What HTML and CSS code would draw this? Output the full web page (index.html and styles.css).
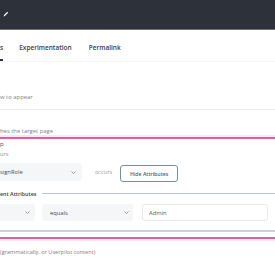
FILE: index.html
```html
<!DOCTYPE html>
<html>
<head>
<meta charset="utf-8">
<link rel="stylesheet" href="styles.css">
</head>
<body>
<header class="topbar">
  <svg class="pencil" width="6" height="6" viewBox="0 0 6 6"><path d="M0.6 5.4 L1 4.1 L4.3 0.8 L5.2 1.7 L1.9 5 Z" fill="#fff"/></svg>
</header>
<nav class="tabs">
  <span class="tab active">s</span>
  <span class="tab">Experimentation</span>
  <span class="tab">Permalink</span>
</nav>
<p class="hint h1">w to appear</p>
<hr class="divider">
<p class="hint h2">hes the target page</p>
<div class="rule-box">
  <div class="rule-title">p</div>
  <div class="rule-sub">urs</div>
  <div class="row1">
    <div class="select s1"><span>signRole</span><svg class="chev" width="5" height="3" viewBox="0 0 5 3"><path d="M0.5 0.5 L2.5 2.5 L4.5 0.5" fill="none" stroke="#888" stroke-width="0.8"/></svg></div>
    <span class="occurs">occurs</span>
    <button class="btn">Hide Attributes</button>
  </div>
  <div class="legend"><span>ent Attributes</span><i class="legend-line"></i></div>
  <div class="row2">
    <div class="select sa"><span></span><svg class="chev" width="5" height="3" viewBox="0 0 5 3"><path d="M0.5 0.5 L2.5 2.5 L4.5 0.5" fill="none" stroke="#888" stroke-width="0.8"/></svg></div>
    <div class="select sb"><span>equals</span><svg class="chev" width="5" height="3" viewBox="0 0 5 3"><path d="M0.5 0.5 L2.5 2.5 L4.5 0.5" fill="none" stroke="#888" stroke-width="0.8"/></svg></div>
    <div class="input">Admin</div>
  </div>
  <div class="blue-line"></div>
</div>
<p class="hint foot">(grammatically, or Userpilot content)</p>
</body>
</html>
```
FILE: styles.css
```css
* { box-sizing: border-box; }
html, body { margin: 0; padding: 0; }
body {
  width: 275px;
  height: 269px;
  overflow: hidden;
  background: #fff;
  font-family: "Open Sans", "Liberation Sans", sans-serif;
  color: #333;
}
.topbar {
  height: 30px;
  background: #2d3139;
  border-bottom: 1px solid #6d7075;
  display: flex;
  align-items: flex-start;
  padding: 11px 0 0 3px;
}
.pencil { display: block; }
.tabs {
  display: flex;
  height: 32px;
  align-items: flex-end;
  border-bottom: 1px solid #f3f4f5;
}
.tab {
  font-size: 6.5px;
  line-height: 10px;
  font-weight: 600;
  color: #3a3d42;
  padding-bottom: 6px;
  border-bottom: 2px solid transparent;
  margin-right: 17px;
}
.tab:first-child { margin-right: 16px; }
.tab.active {
  border-bottom-color: #2d3139;
}
.hint {
  margin: 0;
  font-size: 5.9px;
  line-height: 10px;
  color: #808388;
}
.h1 { margin-top: 30px; }
.divider {
  margin: 7px 0 0;
  border: 0;
  border-top: 1px solid #ececee;
  height: 0;
}
.h2 { margin-top: 16px; }
.rule-box {
  margin-top: 1px;
  border-top: 2px solid #d8629e;
  border-bottom: 2px solid #d8629e;
  box-shadow: 0 0 0 2px #fbe6f0;
  padding-bottom: 5px;
}
.rule-title {
  font-size: 6px;
  line-height: 10px;
  color: #444;
}
.rule-sub {
  font-size: 5.6px;
  line-height: 10px;
  color: #8a8d92;
}
.row1 {
  display: flex;
  align-items: center;
  margin-top: 3px;
}
.select {
  display: flex;
  align-items: center;
  justify-content: space-between;
  background: #f5f6f8;
  border-radius: 3px;
  font-size: 5.8px;
  color: #4a4d52;
}
.s1 {
  height: 18px;
  width: 88px;
  margin-left: -6px;
  padding: 0 6px 0 6px;
}
.chev { display: block; }
.occurs {
  font-size: 5.6px;
  color: #999ca0;
  margin-left: 13px;
}
.btn {
  margin-left: 8px;
  height: 17px;
  width: 58px;
  padding: 0;
  background: #fff;
  border: 1px solid #7290a0;
  border-radius: 3px;
  font-family: inherit;
  font-size: 5.2px;
  font-weight: 600;
  color: #3a6680;
  margin-top: 3px;
}
.legend {
  display: flex;
  align-items: center;
  margin-top: 8px;
  height: 8px;
}
.legend span {
  font-size: 5.4px;
  font-weight: 600;
  color: #3a3d42;
  white-space: nowrap;
}
.legend-line {
  flex: 1;
  height: 1px;
  background: #b9c5cd;
  margin-left: 6px;
  margin-top: -1px;
}
.row2 {
  display: flex;
  margin-top: 6px;
  height: 17px;
}
.sa {
  width: 41px;
  margin-left: -6px;
  padding: 0 5px 0 6px;
}
.sb {
  width: 91px;
  margin-left: 7px;
  padding: 0 4px 0 8px;
}
.input {
  width: 126px;
  margin-left: 9px;
  border: 1px solid #e7e9ec;
  border-radius: 3px;
  font-size: 5.8px;
  color: #555;
  display: flex;
  align-items: center;
  padding-left: 6px;
}
.blue-line {
  margin-top: 9px;
  height: 2px;
  background: #c6d4dd;
}
.foot {
  margin-top: 8px;
  color: #7d8085;
  font-size: 5.6px;
}
```
